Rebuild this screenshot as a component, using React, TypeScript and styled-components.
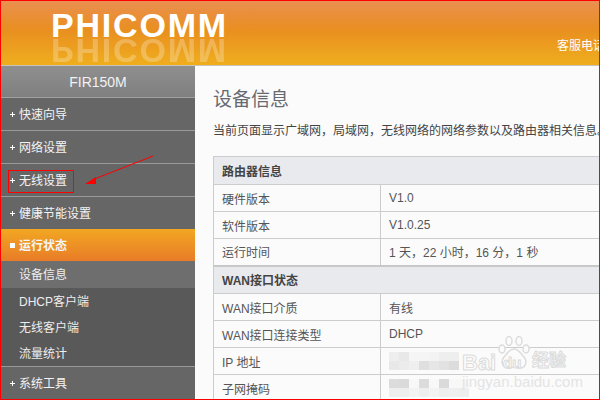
import React from 'react';
import styled, { createGlobalStyle } from 'styled-components';

const GlobalStyle = createGlobalStyle`
  html, body {
    margin: 0;
    padding: 0;
    overflow: hidden;
    background: #fff;
  }
  * {
    box-sizing: border-box;
  }
`;

const FONT = `"Liberation Sans", "Noto Sans CJK SC", sans-serif`;

const Frame = styled.div`
  position: relative;
  width: 600px;
  height: 400px;
  border: 1px solid #f00;
  overflow: hidden;
  display: flex;
  flex-direction: column;
  font-family: ${FONT};
  font-size: 12px;
  background: #fbfbfb;
`;

const Header = styled.header`
  flex: 0 0 65px;
  display: flex;
  justify-content: space-between;
  padding: 12px 0 0 50px;
  overflow: hidden;
  background: linear-gradient(#ea8f50 0%, #e98f20 45%, #efae1e 100%);
  border-bottom: 1px solid #c9c4b8;
`;

const Logo = styled.div`
  display: flex;
  flex-direction: column;
`;

const LogoText = styled.div<{ $mirror?: boolean }>`
  font-size: 34px;
  line-height: 25px;
  height: 25px;
  letter-spacing: 1.8px;
  font-weight: 700;
  color: #fff;
  ${({ $mirror }) => $mirror && `
    transform: scaleY(-1);
    opacity: 0.25;
  `}
`;

const Service = styled.div`
  align-self: flex-start;
  margin-top: 25px;
  font-size: 12px;
  line-height: 16px;
  white-space: nowrap;
  color: #fff;
  width: 42px;
  overflow: hidden;
  flex-shrink: 0;
`;

const Body = styled.div`
  flex: 1;
  min-height: 0;
  display: flex;
`;

const Sidebar = styled.nav`
  flex: 0 0 194px;
  display: flex;
  flex-direction: column;
  background: #666;
`;

const Brand = styled.div`
  flex: 0 0 32px;
  display: flex;
  align-items: center;
  justify-content: center;
  font-size: 14px;
  color: #f2f2f2;
  background: linear-gradient(#8f8f8f, #7f7f7f);
  border-bottom: 1px solid #a0a0a0;
`;

const MenuItem = styled.div<{ $active?: boolean; $flush?: boolean }>`
  flex: 0 0 ${({ $active, $flush }) => ($active || $flush ? '32px' : '33px')};
  display: flex;
  align-items: center;
  gap: 4px;
  padding: 0 0 2px 9px;
  font-size: 12px;
  color: #f4f4f4;
  font-weight: ${({ $active }) => ($active ? 700 : 400)};
  border-bottom: ${({ $active, $flush }) => ($active || $flush ? 'none' : '1px solid #999')};
  background: ${({ $active }) => ($active ? 'linear-gradient(#f2a722, #e87c28)' : '#666')};
`;

const Plus = styled.span`
  position: relative;
  width: 5px;
  height: 5px;
  margin-top: 2px;
  flex-shrink: 0;
  &::before,
  &::after {
    content: '';
    position: absolute;
    background: #fff;
  }
  &::before {
    left: 0;
    right: 0;
    top: 2px;
    height: 1px;
  }
  &::after {
    top: 0;
    bottom: 0;
    left: 2px;
    width: 1px;
  }
`;

const Square = styled.span`
  width: 5px;
  height: 5px;
  margin-top: 2px;
  flex-shrink: 0;
  background: #fff;
`;

const SubMenu = styled.div`
  flex: 0 0 106px;
  display: flex;
  flex-direction: column;
  background: #595959;
  border-bottom: 1px solid #999;
`;

const SubItem = styled.div<{ $active?: boolean }>`
  flex: 0 0 ${({ $active }) => ($active ? '27px' : '26px')};
  display: flex;
  align-items: center;
  padding: 0 0 2px 18px;
  font-size: 12px;
  color: #eee;
  background: ${({ $active }) => ($active ? '#6e6e6e' : 'transparent')};
`;

const Main = styled.main`
  flex: 1;
  min-width: 0;
  overflow: hidden;
  padding: 0 0 0 18px;
  background: #fbfbfb;
`;

const Title = styled.h1`
  margin: 22px 0 0;
  font-size: 19px;
  line-height: 24px;
  font-weight: 400;
  color: #666a70;
`;

const Desc = styled.p`
  margin: 11px 0 0;
  font-size: 12px;
  line-height: 16px;
  white-space: nowrap;
  color: #444;
`;

const Table = styled.table`
  margin-top: 17px;
  width: 460px;
  table-layout: fixed;
  border-collapse: collapse;
  font-size: 12px;
  color: #555;
`;

const Row = styled.tr<{ $tall?: boolean }>`
  height: ${({ $tall }) => ($tall ? '28px' : '27px')};
`;

const Section = styled.th<{ $thick?: boolean }>`
  padding: 0 0 0 8px;
  text-align: left;
  font-weight: 700;
  color: #444;
  background: #e9eaee;
  border: 1px solid #ccc;
  border-top: ${({ $thick }) => ($thick ? '2px solid #c8c8c8' : '1px solid #ccc')};
`;

const Cell = styled.td`
  padding: 0 0 0 8px;
  white-space: nowrap;
  overflow: hidden;
  border: 1px solid #ccc;
`;

/* the address values are pixelated in the screenshot */
const Mosaic = styled.div<{ $cols: number }>`
  display: grid;
  grid-template-columns: repeat(${({ $cols }) => $cols}, 10px);
  grid-auto-rows: 9px;
  filter: blur(0.7px);
`;

const Pixel = styled.span<{ $shade: string }>`
  background: ${({ $shade }) => $shade};
`;

const IP_SHADES = ['#eee', '#e8e8e8', '#f5f5f5', '#f5f5f5', '#f3f3f3', '#eee', '#eee', '#e8e8e8', '#ececec', '#efefef', '#dfdfdf', '#e6e6e6', '#e2e2e2', '#dcdcdc'];
const MASK_SHADES = ['#dcdcdc', '#dadada', '#f8f8f8', '#dcdcdc', '#f8f8f8', '#dadada', '#f8f8f8', '#f8f8f8', '#eee', '#eee', '#f3f3f3', '#eee', '#f3f3f3', '#eee', '#efefef', '#eee'];

/* annotation + watermark, sit on top of the page */
const Callout = styled.div`
  position: absolute;
  left: 7px;
  top: 169px;
  width: 66px;
  height: 23px;
  border: 1px solid #f00;
`;

const ArrowSvg = styled.svg`
  position: absolute;
  left: 79px;
  top: 149px;
`;

const Watermark = styled.div`
  position: absolute;
  left: 461px;
  top: 334px;
  width: 110px;
  height: 54px;
  color: #fbfbfb;
  pointer-events: none;
`;

const WatermarkWord = styled.span<{ $left: number; $top: number; $size: number }>`
  position: absolute;
  left: ${({ $left }) => $left}px;
  top: ${({ $top }) => $top}px;
  font-size: ${({ $size }) => $size}px;
  line-height: 1;
  font-weight: 700;
  white-space: nowrap;
  -webkit-text-stroke: 1px #dcdcdc;
`;

const WatermarkUrl = styled.span`
  position: absolute;
  left: 0;
  top: 40px;
  font-size: 15px;
  line-height: 13px;
  white-space: nowrap;
  color: #e4e4e4;
`;

const PawSvg = styled.svg`
  position: absolute;
  left: 34px;
  top: 0;
`;

function MosaicBlock({ cols, shades }: { cols: number; shades: string[] }) {
  return (
    <Mosaic $cols={cols}>
      {shades.map((shade, i) => (
        <Pixel key={i} $shade={shade} />
      ))}
    </Mosaic>
  );
}

export default function App() {
  return (
    <>
      <GlobalStyle />
      <Frame>
        <Header>
          <Logo>
            <LogoText>PHICOMM</LogoText>
            <LogoText $mirror>PHICOMM</LogoText>
          </Logo>
          <Service>客服电话</Service>
        </Header>
        <Body>
          <Sidebar>
            <Brand>FIR150M</Brand>
            <MenuItem><Plus />快速向导</MenuItem>
            <MenuItem><Plus />网络设置</MenuItem>
            <MenuItem><Plus />无线设置</MenuItem>
            <MenuItem $flush><Plus />健康节能设置</MenuItem>
            <MenuItem $active><Square />运行状态</MenuItem>
            <SubMenu>
              <SubItem $active>设备信息</SubItem>
              <SubItem>DHCP客户端</SubItem>
              <SubItem>无线客户端</SubItem>
              <SubItem>流量统计</SubItem>
            </SubMenu>
            <MenuItem><Plus />系统工具</MenuItem>
          </Sidebar>
          <Main>
            <Title>设备信息</Title>
            <Desc>当前页面显示广域网，局域网，无线网络的网络参数以及路由器相关信息。</Desc>
            <Table>
              <colgroup>
                <col width={167} />
                <col width={293} />
              </colgroup>
              <tbody>
                <Row $tall><Section colSpan={2}>路由器信息</Section></Row>
                <Row><Cell>硬件版本</Cell><Cell>V1.0</Cell></Row>
                <Row><Cell>软件版本</Cell><Cell>V1.0.25</Cell></Row>
                <Row><Cell>运行时间</Cell><Cell>1 天，22 小时，16 分，1 秒</Cell></Row>
                <Row $tall><Section colSpan={2} $thick>WAN接口状态</Section></Row>
                <Row><Cell>WAN接口介质</Cell><Cell>有线</Cell></Row>
                <Row><Cell>WAN接口连接类型</Cell><Cell>DHCP</Cell></Row>
                <Row><Cell>IP 地址</Cell><Cell><MosaicBlock cols={7} shades={IP_SHADES} /></Cell></Row>
                <Row><Cell>子网掩码</Cell><Cell><MosaicBlock cols={8} shades={MASK_SHADES} /></Cell></Row>
              </tbody>
            </Table>
          </Main>
        </Body>
        <Callout />
        <ArrowSvg width="76" height="40" viewBox="0 0 76 40">
          <path d="M73 6 L12 30" stroke="#f00" strokeWidth="1" fill="none" />
          <path d="M5 34 L16 27 L16 34 Z" fill="#f00" />
        </ArrowSvg>
        <Watermark>
          <WatermarkWord $left={0} $top={17} $size={22}>Bai</WatermarkWord>
          <PawSvg width="36" height="36" viewBox="0 0 36 36">
            <g fill="#fbfbfb" stroke="#dcdcdc" strokeWidth="1.5">
              <ellipse cx="6" cy="14" rx="3" ry="4" />
              <ellipse cx="13" cy="6" rx="3" ry="4.5" />
              <ellipse cx="23" cy="6" rx="3" ry="4.5" />
              <ellipse cx="30" cy="14" rx="3" ry="4" />
              <path d="M18 14c5 0 6 4 10 8 4 5 1 12-5 11-2 0-3-1-5-1s-3 1-5 1c-6 1-9-6-5-11 4-4 5-8 10-8z" />
            </g>
          </PawSvg>
          <WatermarkWord $left={41} $top={20} $size={15}>du</WatermarkWord>
          <WatermarkWord $left={70} $top={17} $size={17}>经验</WatermarkWord>
          <WatermarkUrl>jingyan.baidu.com</WatermarkUrl>
        </Watermark>
      </Frame>
    </>
  );
}
